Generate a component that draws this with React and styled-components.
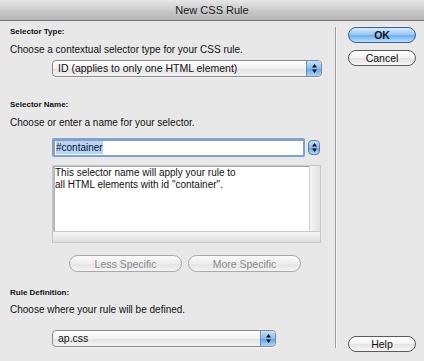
import React from "react";
import styled, { createGlobalStyle, css } from "styled-components";

const Global = createGlobalStyle`
  html, body { margin: 0; padding: 0; background: #e8e8e8; }
  body { font-family: "Liberation Sans", Arial, sans-serif; color: #111; }
  * { box-sizing: border-box; }
`;

const Window = styled.div`
  width: 424px;
  height: 361px;
  display: flex;
  flex-direction: column;
  background: #e8e8e8;
  overflow: hidden;
`;

const TitleBar = styled.div`
  height: 21px;
  flex: none;
  display: flex;
  align-items: center;
  justify-content: center;
  background: linear-gradient(#e6e6e6, #c6c6c6 60%, #b6b6b6);
  border-bottom: 1px solid #707070;
  font-size: 11px;
  color: #1a1a1a;
`;

const Body = styled.div`
  flex: 1;
  display: flex;
  min-height: 0;
`;

const Main = styled.div`
  width: 335px;
  padding: 4px 0 0 10px;
  display: flex;
  flex-direction: column;
  align-items: flex-start;
`;

const Label = styled.div`
  font-size: 8px;
  font-weight: bold;
  line-height: 14px;
  height: 14px;
  margin-top: ${(p) => p.$mt}px;
  color: #111;
`;

const Desc = styled.div`
  font-size: 10px;
  line-height: 14px;
  height: 14px;
  margin-top: ${(p) => p.$mt}px;
  white-space: nowrap;
  color: #111;
`;

const SelectBox = styled.div`
  margin-top: ${(p) => p.$mt}px;
  margin-left: 42px;
  width: ${(p) => p.$w}px;
  height: 17px;
  border: 1px solid #8a8a8a;
  border-radius: 4px;
  background: linear-gradient(#ffffff, #f1f1f1 50%, #e2e2e2 51%, #f4f4f4);
  display: flex;
  align-items: stretch;
  overflow: hidden;
  box-shadow: 0 1px 0 rgba(255,255,255,0.6);
`;

const SelectText = styled.div`
  flex: 1;
  font-size: 10.5px;
  line-height: 15px;
  padding-left: 5px;
  white-space: nowrap;
  color: #111;
`;

const ArrowCell = styled.div`
  width: 15px;
  flex: none;
  border-left: 1px solid #6f8fb8;
  background: linear-gradient(#c5e1fb, #88bdf0 50%, #5fa4ea 51%, #a9d6fb);
  display: flex;
  align-items: center;
  justify-content: center;
`;

const Arrows = () => (
  <svg width="7" height="11" viewBox="0 0 7 11">
    <path d="M3.5 1 L6 4.5 L1 4.5 Z" fill="#111" />
    <path d="M3.5 10 L6 6.5 L1 6.5 Z" fill="#111" />
  </svg>
);

const InputRow = styled.div`
  margin-top: 8px;
  margin-left: 42px;
  display: flex;
  align-items: center;
  gap: 3px;
`;

const Input = styled.div`
  width: 253px;
  height: 19px;
  border: 2px solid #7ba3d6;
  border-radius: 2px;
  background: #fff;
  box-shadow: inset 1px 1px 0 #9a9a9a;
  padding: 0 2px;
  display: flex;
  align-items: center;
`;

const Selected = styled.span`
  background: #b5d5ff;
  font-size: 10px;
  line-height: 13px;
  color: #111;
`;

const Stepper = styled.div`
  width: 12px;
  height: 15px;
  border: 1px solid #5f7fae;
  border-radius: 4px;
  background: linear-gradient(#c5e1fb, #88bdf0 50%, #5fa4ea 51%, #a9d6fb);
  display: flex;
  align-items: center;
  justify-content: center;
`;

const TextArea = styled.div`
  margin-top: 8px;
  margin-left: 42px;
  width: 269px;
  height: 78px;
  border: 1px solid #c8c8c8;
  background: #e6e6e6;
  display: grid;
  grid-template-columns: 1fr 11px;
  grid-template-rows: 1fr 11px;
`;

const TextPane = styled.div`
  background: #fff;
  border-top: 1px solid #a6a6a6;
  border-left: 2px solid #b8b8b8;
  padding: 0;
  font-size: 10px;
  line-height: 12px;
  color: #111;
  white-space: nowrap;
`;

const VScroll = styled.div`
  background: linear-gradient(90deg, #f4f4f4, #e2e2e2);
  border-left: 1px solid #cfcfcf;
`;

const HScroll = styled.div`
  grid-column: 1 / span 2;
  background: linear-gradient(#f6f6f6, #dedede);
  border-top: 1px solid #c9c9c9;
`;

const ButtonRow = styled.div`
  margin-top: 12px;
  margin-left: 59px;
  display: flex;
  gap: 6px;
`;

const PillButton = styled.div`
  height: ${(p) => p.$h || 16}px;
  width: ${(p) => p.$w}px;
  border-radius: 9px;
  font-size: 10.5px;
  display: flex;
  align-items: center;
  justify-content: center;
  ${(p) =>
    p.$variant === "default"
      ? css`
          border: 1px solid #3f5f8f;
          background: linear-gradient(#d5eafd, #9ccaf5 45%, #6eb0ef 55%, #b8e0fd);
          color: #111;
          font-weight: bold;
        `
      : p.$variant === "disabled"
      ? css`
          border: 1px solid #a8a8a8;
          background: linear-gradient(#fafafa, #eeeeee 50%, #e3e3e3 51%, #f3f3f3);
          color: #8c8c8c;
        `
      : css`
          border: 1px solid #5a5a5a;
          background: linear-gradient(#ffffff, #f2f2f2 50%, #e2e2e2 51%, #f7f7f7);
          color: #111;
        `}
`;

const Divider = styled.div`
  width: 2px;
  margin-top: 6px;
  margin-bottom: 13px;
  border-left: 1px solid #9c9c9c;
  border-right: 1px solid #f6f6f6;
`;

const Side = styled.div`
  flex: 1;
  padding: 6px 0 9px 11px;
  display: flex;
  flex-direction: column;
  align-items: flex-start;
`;

const Spacer = styled.div`
  flex: 1;
`;

const Gap = styled.div`
  height: ${(p) => p.$h}px;
  flex: none;
`;

export default function App() {
  return (
    <>
      <Global />
      <Window>
        <TitleBar>New CSS Rule</TitleBar>
        <Body>
          <Main>
            <Label $mt={0}>Selector Type:</Label>
            <Desc $mt={4}>Choose a contextual selector type for your CSS rule.</Desc>
            <SelectBox $mt={3} $w={270}>
              <SelectText>ID (applies to only one HTML element)</SelectText>
              <ArrowCell><Arrows /></ArrowCell>
            </SelectBox>
            <Label $mt={21}>Selector Name:</Label>
            <Desc $mt={4}>Choose or enter a name for your selector.</Desc>
            <InputRow>
              <Input><Selected>#container</Selected></Input>
              <Stepper><Arrows /></Stepper>
            </InputRow>
            <TextArea>
              <TextPane>
                This selector name will apply your rule to
                <br />
                all HTML elements with id "container".
              </TextPane>
              <VScroll />
              <HScroll />
            </TextArea>
            <ButtonRow>
              <PillButton $variant="disabled" $w={113} $h={17}>Less Specific</PillButton>
              <PillButton $variant="disabled" $w={113} $h={17}>More Specific</PillButton>
            </ButtonRow>
            <Label $mt={14}>Rule Definition:</Label>
            <Desc $mt={3}>Choose where your rule will be defined.</Desc>
            <SelectBox $mt={13} $w={224}>
              <SelectText>ap.css</SelectText>
              <ArrowCell><Arrows /></ArrowCell>
            </SelectBox>
          </Main>
          <Divider />
          <Side>
            <PillButton $variant="default" $w={68}>OK</PillButton>
            <Gap $h={7} />
            <PillButton $w={68}>Cancel</PillButton>
            <Spacer />
            <PillButton $w={68}>Help</PillButton>
          </Side>
        </Body>
      </Window>
    </>
  );
}
